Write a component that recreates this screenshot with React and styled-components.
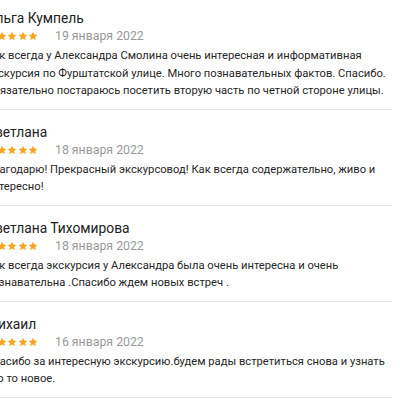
import React from "react";
import styled, { createGlobalStyle } from "styled-components";

const GlobalStyle = createGlobalStyle`
  html, body {
    margin: 0;
    padding: 0;
    background: #fff;
    overflow: hidden;
  }
  body {
    font-family: Roboto, "Liberation Sans", sans-serif;
  }
`;

// Styles
const List = styled.div`
  width: 406px;
  margin-left: -14px;
  margin-top: -4px;
`;

const Review = styled.div`
  padding: 13px 0 9px;
  border-bottom: 1px solid #e9e9e9;
`;

const Name = styled.div`
  font-size: 13.8px;
  line-height: 18px;
  color: #222;
`;

const Meta = styled.div`
  display: flex;
  align-items: center;
  height: 18px;
`;

const Stars = styled.div`
  display: flex;
  gap: 0.5px;
  margin-right: 17px;
`;

const DateText = styled.span`
  font-size: 12.3px;
  color: #999;
`;

const Text = styled.p`
  margin: 2px 0 0;
  font-size: 11.2px;
  line-height: 17.5px;
  color: #262626;
  padding-right: 6px;
`;

const Star = () => (
  <svg width="10" height="10" viewBox="0 0 24 24">
    <polygon
      fill="#f5a623"
      points="12,1.5 15.1,8.6 22.8,9.3 17,14.4 18.7,22 12,18 5.3,22 7,14.4 1.2,9.3 8.9,8.6"
    />
  </svg>
);

const reviews = [
  {
    name: "Ольга Кумпель",
    date: "19 января 2022",
    text:
      "Как всегда у Александра Смолина очень интересная и информативная экскурсия по Фурштатской улице. Много познавательных фактов. Спасибо. Обязательно постараюсь посетить вторую часть по четной стороне улицы.",
  },
  {
    name: "Светлана",
    date: "18 января 2022",
    text:
      "Благодарю! Прекрасный экскурсовод! Как всегда содержательно, живо и интересно!",
  },
  {
    name: "Светлана Тихомирова",
    date: "18 января 2022",
    text:
      "Как всегда экскурсия у Александра была очень интересна и очень познавательна .Спасибо ждем новых встреч .",
  },
  {
    name: "Михаил",
    date: "16 января 2022",
    text:
      "Спасибо за интересную экскурсию.будем рады встретиться снова и узнать что то новое.",
  },
];

const App = () => {
  return (
    <>
      <GlobalStyle />
      <List>
        {reviews.map((r) => (
          <Review key={r.name}>
            <Name>{r.name}</Name>
            <Meta>
              <Stars>
                {[0, 1, 2, 3, 4].map((i) => (
                  <Star key={i} />
                ))}
              </Stars>
              <DateText>{r.date}</DateText>
            </Meta>
            <Text>{r.text}</Text>
          </Review>
        ))}
      </List>
    </>
  );
};

export default App;
